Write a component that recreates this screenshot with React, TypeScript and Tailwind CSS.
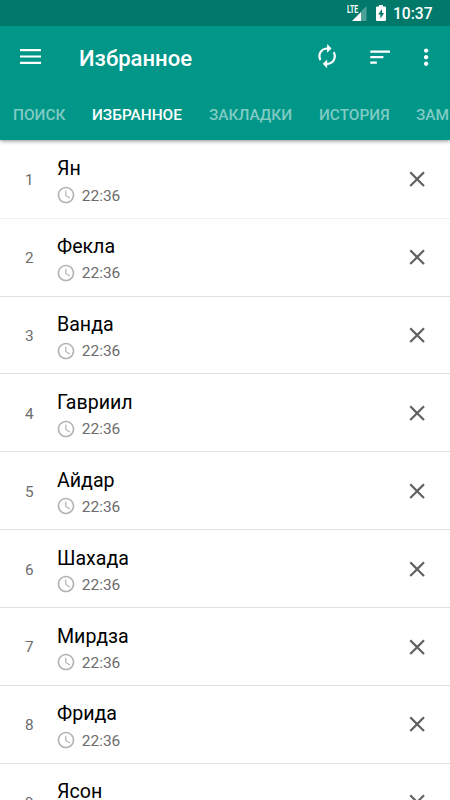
import React from "react";

const names = ["Ян", "Фекла", "Ванда", "Гавриил", "Айдар", "Шахада", "Мирдза", "Фрида", "Ясон"];

const tabs = [
  { label: "ПОИСК", cls: "w-[79px] text-[#80cbc4]" },
  { label: "ИЗБРАННОЕ", cls: "w-[117px] text-white" },
  { label: "ЗАКЛАДКИ", cls: "w-[110px] text-[#80cbc4]" },
  { label: "ИСТОРИЯ", cls: "w-[97px] text-[#80cbc4]" },
  { label: "ЗАМ", cls: "w-[34px] text-[#80cbc4]" },
];

function Icon({ d, className }: { d: string; className: string }) {
  return (
    <svg viewBox="0 0 24 24" fill="currentColor" className={`shrink-0 ${className}`}>
      <path d={d} />
    </svg>
  );
}

const AUTORENEW =
  "M12 6v3l4-4-4-4v3c-4.42 0-8 3.58-8 8 0 1.57.46 3.03 1.24 4.26L6.7 14.8c-.45-.83-.7-1.79-.7-2.8 0-3.31 2.69-6 6-6zm6.76 1.74L17.3 9.2c.44.84.7 1.79.7 2.8 0 3.31-2.69 6-6 6v-3l-4 4 4 4v-3c4.42 0 8-3.58 8-8 0-1.57-.46-3.03-1.24-4.26z";
const SORT = "M3 18h6v-2H3v2zM3 6v2h18V6H3zm0 7h12v-2H3v2z";
const MORE =
  "M12 8c1.1 0 2-.9 2-2s-.9-2-2-2-2 .9-2 2 .9 2 2 2zm0 2c-1.1 0-2 .9-2 2s.9 2 2 2 2-.9 2-2-.9-2-2-2zm0 6c-1.1 0-2 .9-2 2s.9 2 2 2 2-.9 2-2-.9-2-2-2z";
const CLOSE =
  "M19 6.41L17.59 5 12 10.59 6.41 5 5 6.41 10.59 12 5 17.59 6.41 19 12 13.41 17.59 19 19 17.59 13.41 12z";
const CLOCK =
  "M11.99 2C6.47 2 2 6.48 2 12s4.47 10 9.99 10C17.52 22 22 17.52 22 12S17.52 2 11.99 2zM12 20c-4.42 0-8-3.58-8-8s3.58-8 8-8 8 3.58 8 8-3.58 8-8 8zm.5-13H11v6l5.25 3.15.75-1.23-4.5-2.67z";

function StatusBar() {
  return (
    <div className="flex h-[26px] items-center justify-end bg-[#00796b] pr-[17px] text-white">
      <svg viewBox="0 0 20 18" className="mr-[9px] h-[18px] w-[20px]">
        <path d="M19.500 2v15H14V7.500z" fill="#fff" fillOpacity=".3" />
        <path d="M14 8v9H5z" fill="#fff" />
        <text x="0" y="9" fontSize="10" fontWeight="700" textLength="11" lengthAdjust="spacingAndGlyphs" fill="#fff" fontFamily="Roboto, sans-serif">
          LTE
        </text>
      </svg>
      <svg viewBox="0 0 10 16" className="mr-[7.5px] h-[16px] w-[10px]">
        <path d="M3 0h4v1.600h2q1 0 1 1V15q0 1-1 1H1q-1 0-1-1V2.600q0-1 1-1h2z" fill="#fff" />
        <path d="M6 4 2.200 9.600h2.200v4.200L8 8H6z" fill="#00796b" />
      </svg>
      <span className="w-[40px] whitespace-nowrap pt-[2px] text-[15.6px] font-medium leading-[26px]">10:37</span>
    </div>
  );
}

function Row({ name, index }: { name: string; index: number }) {
  return (
    <li className="flex h-[77.86px] shrink-0 items-center border-b border-[#e1e1e1] pr-[19.5px] first:border-[#f0f0f0]">
      <span className="w-[57px] pl-[25px] pt-[2px] text-[15.3px] leading-[18px] text-[#6c6c6c]">{index}</span>
      <div className="flex grow flex-col pt-[5.8px]">
        <span className="text-[19.6px] leading-[24px] text-black">{name}</span>
        <span className="mt-[1.6px] flex h-[24px] items-center">
          <Icon d={CLOCK} className="-ml-[0.6px] h-[20px] w-[20px] text-[#b4b4b4]" />
          <span className="ml-[5.3px] pt-[1px] text-[15.5px] leading-[24px] text-[#6c6c6c]">22:36</span>
        </span>
      </div>
      <Icon d={CLOSE} className="mt-[0.3px] h-[26.25px] w-[26.25px] text-[#616161]" />
    </li>
  );
}

export default function App() {
  return (
    <div className="flex h-[800px] w-[450px] flex-col overflow-hidden bg-white font-['Roboto','Noto_Sans',sans-serif]">
      <header className="z-10 shrink-0 bg-[#009688] shadow-[0_1px_4px_rgba(0,0,0,0.45)]">
        <StatusBar />
        <div className="flex h-[61px] items-center pl-[20px] pr-[11px] text-white">
          <svg viewBox="0 0 21 15" className="h-[15px] w-[21px]" fill="currentColor">
            <path d="M0 0h21v2.200H0zM0 6.400h21v2.200H0zM0 12.800h21V15H0z" />
          </svg>
          <h1 className="ml-[38px] grow pt-[3px] text-[22.1px] font-medium leading-[28px]">Избранное</h1>
          <Icon d={AUTORENEW} className="h-[26.25px] w-[26.25px]" />
          <Icon d={SORT} className="ml-[26px] mt-[1px] h-[26.25px] w-[26.25px]" />
          <Icon d={MORE} className="ml-[20px] mt-[1px] h-[26.25px] w-[26.25px]" />
        </div>
        <nav className="flex h-[53px] overflow-hidden pl-[13px]">
          {tabs.map((t) => (
            <span key={t.label} className={`shrink-0 whitespace-nowrap text-[15.4px] font-medium leading-[56px] ${t.cls}`}>
              {t.label}
            </span>
          ))}
        </nav>
      </header>
      <ul className="flex flex-col pt-[0.9px]">
        {names.map((n, i) => (
          <Row key={n} name={n} index={i + 1} />
        ))}
      </ul>
    </div>
  );
}
